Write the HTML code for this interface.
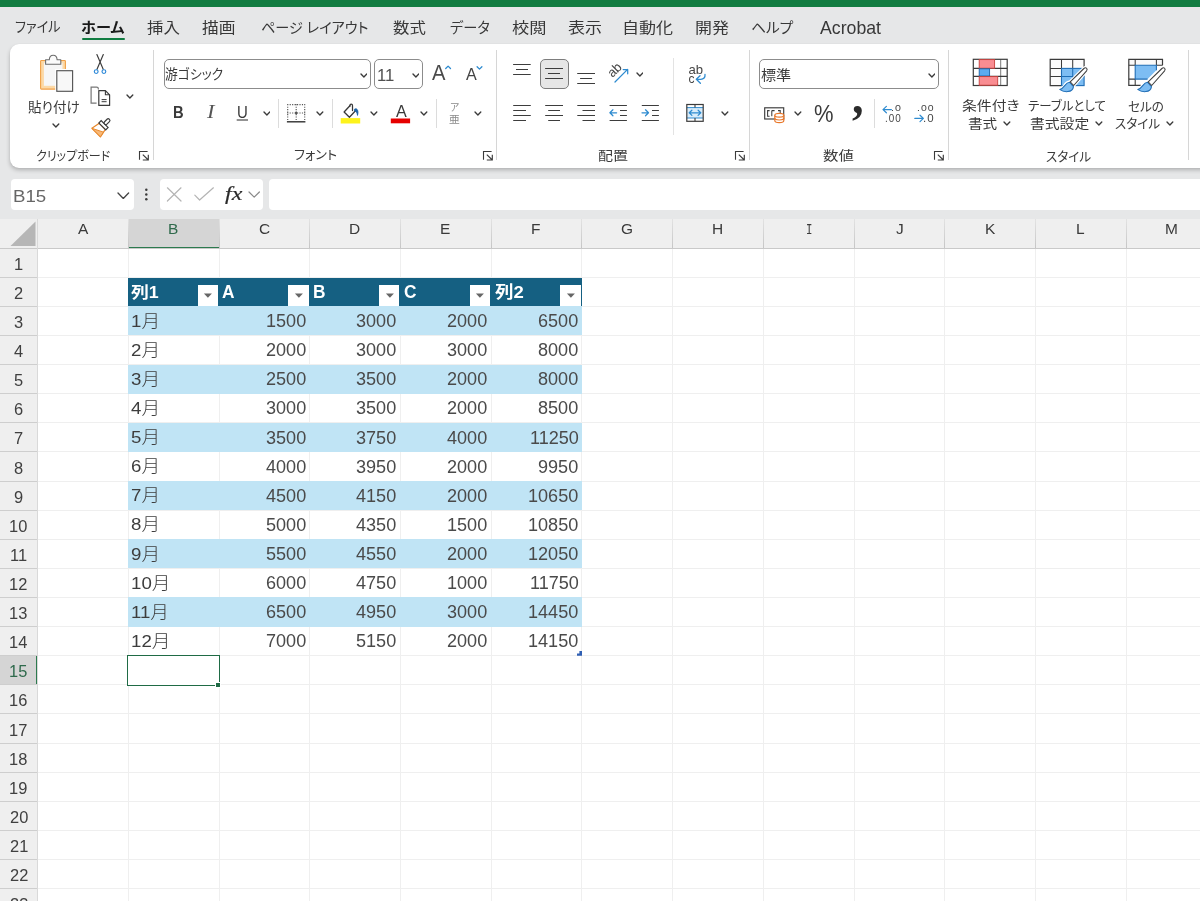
<!DOCTYPE html>
<html lang="ja"><head><meta charset="utf-8"><title>Excel</title>
<style>
html,body{margin:0;padding:0}
body{width:1200px;height:901px;overflow:hidden;position:relative;background:#e6e7e8;font-family:'Liberation Sans','Noto Sans CJK JP',sans-serif}
.abs,.t,svg.i{position:absolute}
.t{transform-origin:0 0;margin:0;padding:0}
#green{left:0;top:0;width:1200px;height:6.6px;background:#127c41}
#tabul{left:82px;top:37.5px;width:43px;height:2.5px;background:#107c41;border-radius:1.5px}
#ribbon{left:10px;top:44px;width:1210px;height:124px;background:#fff;border-radius:9px;box-shadow:0 2.5px 4px -0.5px rgba(0,0,0,.24),0 0 1.5px rgba(0,0,0,.08)}
.vsep{width:1px;background:#d6d6d6}
.combo{box-sizing:border-box;border:1px solid #8c8c8c;border-radius:5px;background:#fff;height:30px;top:59px}
.fbox{background:#fff;border-radius:4px;top:179px;height:30.5px}
#selbtn{left:539.5px;top:59px;width:29.5px;height:30px;box-sizing:border-box;border:1px solid #7d7d7d;border-radius:5px;background:#e6e6e6}
/* grid */
#colhdr{left:0;top:219px;width:1200px;height:29px;background:#efefef}
#rowhdr{left:0;top:248px;width:37px;height:653px;background:#efefef}
#sheet{left:38px;top:248px;width:1162px;height:653px;background:#fff}
.hl{height:1px;background:#efefef;left:38px;width:1162px}
.vl{width:1px;background:#efefef;top:248px;height:653px}
.rhl{height:1px;background:#cecece;left:0;width:37px}
.chl{width:1px;background:linear-gradient(#e2e2e2,#c6c6c6);top:219px;height:29px}
#app{position:absolute;left:0;top:0;width:1200px;height:901px;will-change:transform}

</style></head>
<body>
<div id="app">
<div class="abs" id="green"></div>
<div class="abs" id="tabul"></div>
<div class="abs" id="ribbon"></div>
<!-- ribbon group separators -->
<div class="abs vsep" style="left:153px;top:50px;height:110px"></div>
<div class="abs vsep" style="left:496px;top:50px;height:110px"></div>
<div class="abs vsep" style="left:749px;top:50px;height:110px"></div>
<div class="abs vsep" style="left:948px;top:50px;height:110px"></div>
<div class="abs vsep" style="left:1188px;top:50px;height:110px"></div>
<!-- small separators -->
<div class="abs vsep" style="left:278px;top:99px;height:29px;background:#dcdcdc"></div>
<div class="abs vsep" style="left:332px;top:99px;height:29px;background:#dcdcdc"></div>
<div class="abs vsep" style="left:436px;top:99px;height:29px;background:#dcdcdc"></div>
<div class="abs vsep" style="left:673px;top:58px;height:77px;background:#e3e3e3"></div>
<div class="abs vsep" style="left:874px;top:99px;height:29px;background:#dcdcdc"></div>
<!-- combos -->
<div class="abs combo" style="left:164px;width:207px"></div>
<div class="abs combo" style="left:373.5px;width:49.5px"></div>
<div class="abs combo" style="left:759px;width:179.5px"></div>
<div class="abs" id="selbtn"></div>
<!-- formula bar -->
<div class="abs fbox" style="left:10.5px;width:123px"></div>
<div class="abs fbox" style="left:160px;width:103px"></div>
<div class="abs fbox" style="left:268.5px;width:940px"></div>

<div class="abs" id="colhdr"></div>
<div class="abs" id="rowhdr"></div>
<div class="abs" id="sheet"></div>
<div class="abs" style="left:128px;top:219px;width:91px;height:29px;background:#d5d5d5"></div>
<div class="abs" style="left:128px;top:246.5px;width:91px;height:1.5px;background:#2c7a4e"></div>
<div class="abs" style="left:0;top:656.1px;width:37px;height:28.6px;background:#d5d5d5"></div>
<div class="abs" style="left:36px;top:656.1px;width:1.5px;height:28.6px;background:#2c7a4e"></div>
<svg class="i" style="left:9px;top:220px" width="28" height="27" viewBox="0 0 28 27"><path d="M26.5 1.5V26H1.5Z" fill="#b6b6b6"/></svg>
<div class="abs" style="left:128px;top:306.3px;width:454px;height:29.11px;background:#c0e4f5"></div>
<div class="abs" style="left:128px;top:364.5px;width:454px;height:29.11px;background:#c0e4f5"></div>
<div class="abs" style="left:128px;top:422.8px;width:454px;height:29.11px;background:#c0e4f5"></div>
<div class="abs" style="left:128px;top:481.0px;width:454px;height:29.11px;background:#c0e4f5"></div>
<div class="abs" style="left:128px;top:539.2px;width:454px;height:29.11px;background:#c0e4f5"></div>
<div class="abs" style="left:128px;top:597.4px;width:454px;height:29.11px;background:#c0e4f5"></div>
<div class="abs hl" style="top:276.7px"></div>
<div class="abs rhl" style="top:276.7px"></div>
<div class="abs hl" style="top:305.8px"></div>
<div class="abs rhl" style="top:305.8px"></div>
<div class="abs hl" style="top:334.9px"></div>
<div class="abs rhl" style="top:334.9px"></div>
<div class="abs hl" style="top:364.0px"></div>
<div class="abs rhl" style="top:364.0px"></div>
<div class="abs hl" style="top:393.1px"></div>
<div class="abs rhl" style="top:393.1px"></div>
<div class="abs hl" style="top:422.3px"></div>
<div class="abs rhl" style="top:422.3px"></div>
<div class="abs hl" style="top:451.4px"></div>
<div class="abs rhl" style="top:451.4px"></div>
<div class="abs hl" style="top:480.5px"></div>
<div class="abs rhl" style="top:480.5px"></div>
<div class="abs hl" style="top:509.6px"></div>
<div class="abs rhl" style="top:509.6px"></div>
<div class="abs hl" style="top:538.7px"></div>
<div class="abs rhl" style="top:538.7px"></div>
<div class="abs hl" style="top:567.8px"></div>
<div class="abs rhl" style="top:567.8px"></div>
<div class="abs hl" style="top:596.9px"></div>
<div class="abs rhl" style="top:596.9px"></div>
<div class="abs hl" style="top:626.0px"></div>
<div class="abs rhl" style="top:626.0px"></div>
<div class="abs hl" style="top:655.1px"></div>
<div class="abs rhl" style="top:655.1px"></div>
<div class="abs hl" style="top:684.2px"></div>
<div class="abs rhl" style="top:684.2px"></div>
<div class="abs hl" style="top:713.4px"></div>
<div class="abs rhl" style="top:713.4px"></div>
<div class="abs hl" style="top:742.5px"></div>
<div class="abs rhl" style="top:742.5px"></div>
<div class="abs hl" style="top:771.6px"></div>
<div class="abs rhl" style="top:771.6px"></div>
<div class="abs hl" style="top:800.7px"></div>
<div class="abs rhl" style="top:800.7px"></div>
<div class="abs hl" style="top:829.8px"></div>
<div class="abs rhl" style="top:829.8px"></div>
<div class="abs hl" style="top:858.9px"></div>
<div class="abs rhl" style="top:858.9px"></div>
<div class="abs hl" style="top:888.0px"></div>
<div class="abs rhl" style="top:888.0px"></div>
<div class="abs vl" style="left:37.0px"></div>
<div class="abs chl" style="left:37.0px"></div>
<div class="abs vl" style="left:127.7px"></div>
<div class="abs chl" style="left:127.7px"></div>
<div class="abs vl" style="left:218.5px"></div>
<div class="abs chl" style="left:218.5px"></div>
<div class="abs vl" style="left:309.2px"></div>
<div class="abs chl" style="left:309.2px"></div>
<div class="abs vl" style="left:399.9px"></div>
<div class="abs chl" style="left:399.9px"></div>
<div class="abs vl" style="left:490.7px"></div>
<div class="abs chl" style="left:490.7px"></div>
<div class="abs vl" style="left:581.4px"></div>
<div class="abs chl" style="left:581.4px"></div>
<div class="abs vl" style="left:672.1px"></div>
<div class="abs chl" style="left:672.1px"></div>
<div class="abs vl" style="left:762.8px"></div>
<div class="abs chl" style="left:762.8px"></div>
<div class="abs vl" style="left:853.6px"></div>
<div class="abs chl" style="left:853.6px"></div>
<div class="abs vl" style="left:944.3px"></div>
<div class="abs chl" style="left:944.3px"></div>
<div class="abs vl" style="left:1035.0px"></div>
<div class="abs chl" style="left:1035.0px"></div>
<div class="abs vl" style="left:1125.8px"></div>
<div class="abs chl" style="left:1125.8px"></div>
<div class="abs" style="left:0;top:247.7px;width:1200px;height:1px;background:#c9c9c9;z-index:0"></div>
<div class="abs" style="left:37px;top:219px;width:1px;height:682px;background:#d9d9d9"></div>
<div class="abs" style="left:128px;top:278.0px;width:454px;height:28.41px;background:#156082"></div>
<div class="abs" style="left:128px;top:306.3px;width:454px;height:29.11px;background:#c0e4f5"></div>
<div class="abs" style="left:128px;top:364.5px;width:454px;height:29.11px;background:#c0e4f5"></div>
<div class="abs" style="left:128px;top:422.8px;width:454px;height:29.11px;background:#c0e4f5"></div>
<div class="abs" style="left:128px;top:481.0px;width:454px;height:29.11px;background:#c0e4f5"></div>
<div class="abs" style="left:128px;top:539.2px;width:454px;height:29.11px;background:#c0e4f5"></div>
<div class="abs" style="left:128px;top:597.4px;width:454px;height:29.11px;background:#c0e4f5"></div>
<div class="abs" style="left:197.5px;top:285.3px;width:20.5px;height:20.6px;background:#fff"></div>
<svg class="i" style="left:203.1px;top:292.6px" width="10" height="6" viewBox="0 0 10 6"><path d="M0.9 0.6H8.9L4.9 4.7Z" fill="#666"/></svg>
<div class="abs" style="left:288.2px;top:285.3px;width:20.5px;height:20.6px;background:#fff"></div>
<svg class="i" style="left:293.8px;top:292.6px" width="10" height="6" viewBox="0 0 10 6"><path d="M0.9 0.6H8.9L4.9 4.7Z" fill="#666"/></svg>
<div class="abs" style="left:378.9px;top:285.3px;width:20.5px;height:20.6px;background:#fff"></div>
<svg class="i" style="left:384.5px;top:292.6px" width="10" height="6" viewBox="0 0 10 6"><path d="M0.9 0.6H8.9L4.9 4.7Z" fill="#666"/></svg>
<div class="abs" style="left:469.7px;top:285.3px;width:20.5px;height:20.6px;background:#fff"></div>
<svg class="i" style="left:475.3px;top:292.6px" width="10" height="6" viewBox="0 0 10 6"><path d="M0.9 0.6H8.9L4.9 4.7Z" fill="#666"/></svg>
<div class="abs" style="left:560.4px;top:285.3px;width:20.5px;height:20.6px;background:#fff"></div>
<svg class="i" style="left:566.0px;top:292.6px" width="10" height="6" viewBox="0 0 10 6"><path d="M0.9 0.6H8.9L4.9 4.7Z" fill="#666"/></svg>
<div class="abs" style="left:127.3px;top:655px;width:92.7px;height:31.1px;box-sizing:border-box;border:1.3px solid #1f6b45;background:#fff"></div>
<div class="abs" style="left:215px;top:681.6px;width:4.4px;height:4.3px;background:#1f6b45;border:1px solid #fff"></div>
<svg class="i" style="left:576px;top:650px" width="7" height="7" viewBox="0 0 7 7"><path d="M1 5.8V3.5H3.4V1.1H6V5.8Z" fill="#2f5fb3"/></svg>
<svg class="i" style="left:52.0px;top:122.6px" width="7.8" height="5.0" viewBox="0 0 7.8 5.0" fill="none"><path d="M1 1L3.90 4.00L6.8 1" stroke="#3b3b3b" stroke-width="1.35" stroke-linecap="round" stroke-linejoin="round"/></svg>
<svg class="i" style="left:125.8px;top:94.2px" width="7.8" height="5.0" viewBox="0 0 7.8 5.0" fill="none"><path d="M1 1L3.90 4.00L6.8 1" stroke="#3b3b3b" stroke-width="1.35" stroke-linecap="round" stroke-linejoin="round"/></svg>
<svg class="i" style="left:262.5px;top:111.3px" width="7.8" height="5.0" viewBox="0 0 7.8 5.0" fill="none"><path d="M1 1L3.90 4.00L6.8 1" stroke="#3b3b3b" stroke-width="1.35" stroke-linecap="round" stroke-linejoin="round"/></svg>
<svg class="i" style="left:316.2px;top:111.3px" width="7.8" height="5.0" viewBox="0 0 7.8 5.0" fill="none"><path d="M1 1L3.90 4.00L6.8 1" stroke="#3b3b3b" stroke-width="1.35" stroke-linecap="round" stroke-linejoin="round"/></svg>
<svg class="i" style="left:370.0px;top:111.3px" width="7.8" height="5.0" viewBox="0 0 7.8 5.0" fill="none"><path d="M1 1L3.90 4.00L6.8 1" stroke="#3b3b3b" stroke-width="1.35" stroke-linecap="round" stroke-linejoin="round"/></svg>
<svg class="i" style="left:420.2px;top:111.3px" width="7.8" height="5.0" viewBox="0 0 7.8 5.0" fill="none"><path d="M1 1L3.90 4.00L6.8 1" stroke="#3b3b3b" stroke-width="1.35" stroke-linecap="round" stroke-linejoin="round"/></svg>
<svg class="i" style="left:473.9px;top:111.3px" width="7.8" height="5.0" viewBox="0 0 7.8 5.0" fill="none"><path d="M1 1L3.90 4.00L6.8 1" stroke="#3b3b3b" stroke-width="1.35" stroke-linecap="round" stroke-linejoin="round"/></svg>
<svg class="i" style="left:359.6px;top:72.7px" width="7.8" height="5.0" viewBox="0 0 7.8 5.0" fill="none"><path d="M1 1L3.90 4.00L6.8 1" stroke="#3b3b3b" stroke-width="1.35" stroke-linecap="round" stroke-linejoin="round"/></svg>
<svg class="i" style="left:411.7px;top:72.7px" width="7.8" height="5.0" viewBox="0 0 7.8 5.0" fill="none"><path d="M1 1L3.90 4.00L6.8 1" stroke="#3b3b3b" stroke-width="1.35" stroke-linecap="round" stroke-linejoin="round"/></svg>
<svg class="i" style="left:635.6px;top:71.7px" width="7.8" height="5.0" viewBox="0 0 7.8 5.0" fill="none"><path d="M1 1L3.90 4.00L6.8 1" stroke="#3b3b3b" stroke-width="1.35" stroke-linecap="round" stroke-linejoin="round"/></svg>
<svg class="i" style="left:721.2px;top:111.3px" width="7.8" height="5.0" viewBox="0 0 7.8 5.0" fill="none"><path d="M1 1L3.90 4.00L6.8 1" stroke="#3b3b3b" stroke-width="1.35" stroke-linecap="round" stroke-linejoin="round"/></svg>
<svg class="i" style="left:793.9px;top:111.3px" width="7.8" height="5.0" viewBox="0 0 7.8 5.0" fill="none"><path d="M1 1L3.90 4.00L6.8 1" stroke="#3b3b3b" stroke-width="1.35" stroke-linecap="round" stroke-linejoin="round"/></svg>
<svg class="i" style="left:927.6px;top:72.7px" width="7.8" height="5.0" viewBox="0 0 7.8 5.0" fill="none"><path d="M1 1L3.90 4.00L6.8 1" stroke="#3b3b3b" stroke-width="1.35" stroke-linecap="round" stroke-linejoin="round"/></svg>
<svg class="i" style="left:1003.4px;top:121.0px" width="7.8" height="5.0" viewBox="0 0 7.8 5.0" fill="none"><path d="M1 1L3.90 4.00L6.8 1" stroke="#3b3b3b" stroke-width="1.35" stroke-linecap="round" stroke-linejoin="round"/></svg>
<svg class="i" style="left:1095.2px;top:121.0px" width="7.8" height="5.0" viewBox="0 0 7.8 5.0" fill="none"><path d="M1 1L3.90 4.00L6.8 1" stroke="#3b3b3b" stroke-width="1.35" stroke-linecap="round" stroke-linejoin="round"/></svg>
<svg class="i" style="left:1166.2px;top:121.0px" width="7.8" height="5.0" viewBox="0 0 7.8 5.0" fill="none"><path d="M1 1L3.90 4.00L6.8 1" stroke="#3b3b3b" stroke-width="1.35" stroke-linecap="round" stroke-linejoin="round"/></svg>
<svg class="i" style="left:117.2px;top:191.9px" width="12.6" height="7.5" viewBox="0 0 12.6 7.5" fill="none"><path d="M1 1L6.30 6.50L11.6 1" stroke="#444" stroke-width="1.3" stroke-linecap="round" stroke-linejoin="round"/></svg>
<svg class="i" style="left:248.3px;top:191.4px" width="12.4" height="7.2" viewBox="0 0 12.4 7.2" fill="none"><path d="M1 1L6.20 6.20L11.4 1" stroke="#8a8a8a" stroke-width="1.2" stroke-linecap="round" stroke-linejoin="round"/></svg>
<svg class="i" style="left:138.2px;top:150px" width="12" height="12" viewBox="0 0 12 12" fill="none"><path d="M9.6 1.5H1.5V9.7" stroke="#3b3b3b" stroke-width="1.1"/><path d="M4.8 4.7L10.3 10M10.3 4.7V10H4.8" stroke="#3b3b3b" stroke-width="1.15"/></svg>
<svg class="i" style="left:481.8px;top:150px" width="12" height="12" viewBox="0 0 12 12" fill="none"><path d="M9.6 1.5H1.5V9.7" stroke="#3b3b3b" stroke-width="1.1"/><path d="M4.8 4.7L10.3 10M10.3 4.7V10H4.8" stroke="#3b3b3b" stroke-width="1.15"/></svg>
<svg class="i" style="left:733.8px;top:150px" width="12" height="12" viewBox="0 0 12 12" fill="none"><path d="M9.6 1.5H1.5V9.7" stroke="#3b3b3b" stroke-width="1.1"/><path d="M4.8 4.7L10.3 10M10.3 4.7V10H4.8" stroke="#3b3b3b" stroke-width="1.15"/></svg>
<svg class="i" style="left:933.2px;top:150px" width="12" height="12" viewBox="0 0 12 12" fill="none"><path d="M9.6 1.5H1.5V9.7" stroke="#3b3b3b" stroke-width="1.1"/><path d="M4.8 4.7L10.3 10M10.3 4.7V10H4.8" stroke="#3b3b3b" stroke-width="1.15"/></svg>
<svg class="i" style="left:38px;top:53px" width="38" height="41" viewBox="0 0 38 41" fill="none">
<rect x="2.6" y="7.5" width="24.8" height="28.6" rx="0.8" fill="#fcd9a6" stroke="#f1a047" stroke-width="1.1"/>
<rect x="5.9" y="9.6" width="18.6" height="23.2" fill="#f6f6f6"/>
<rect x="17.2" y="16" width="19" height="23.8" fill="#fff"/>
<path d="M7.6 11.3V6.7H11.3C11.6 0.7 18.8 0.7 19.1 6.7H22.8V11.3Z" fill="#fbfbfb" stroke="#6c6c6c" stroke-width="1.1" stroke-linejoin="round"/>
<rect x="18.8" y="17.7" width="15.8" height="20.6" fill="#f8f8f8" stroke="#555" stroke-width="1.15"/>
</svg>
<svg class="i" style="left:92px;top:53px" width="16" height="22" viewBox="0 0 16 22" fill="none">
<path d="M4.9 1.6L11.2 16.2M11.3 1.6L5 16.2" stroke="#3b3b3b" stroke-width="1.15" stroke-linecap="round"/>
<circle cx="4.2" cy="18.6" r="1.9" stroke="#2b88d8" stroke-width="1.15"/>
<circle cx="11.9" cy="18.6" r="1.9" stroke="#2b88d8" stroke-width="1.15"/>
</svg>
<svg class="i" style="left:89px;top:85px" width="23" height="22" viewBox="0 0 23 22" fill="none">
<path d="M7.6 18.2H2.1V2.1H7.6A1.8 1.8 0 0 1 9.4 3.9V4.6" stroke="#777" stroke-width="1.2" fill="none"/>
<path d="M9.8 5.6H16.4L20.6 9.8V20.4H9.8Z" fill="#fff" stroke="#3b3b3b" stroke-width="1.2" stroke-linejoin="round"/>
<path d="M16.4 5.6V9.8H20.6" stroke="#3b3b3b" stroke-width="1.1" fill="none"/>
<path d="M12.6 14.6H17.6M12.6 16.7H17.6" stroke="#3b3b3b" stroke-width="1"/>
</svg>
<svg class="i" style="left:88px;top:116px" width="24" height="22" viewBox="0 0 24 22" fill="none">
<g transform="translate(14.3 10.4) rotate(45)">
<path d="M-4.3 0H4.3L6 8.7H-6Z" fill="#fff" stroke="#e8872a" stroke-width="1.2" stroke-linejoin="round"/>
<path d="M-6 8.7L4.9 3.2L6 8.7Z" fill="#f7b877" stroke="#e8872a" stroke-width="0.9" stroke-linejoin="round"/>
<rect x="-4.9" y="-3.3" width="9.8" height="3.3" fill="#fff" stroke="#3b3b3b" stroke-width="1.15"/>
<rect x="-1.7" y="-10" width="3.4" height="6.7" rx="1.6" fill="#fff" stroke="#3b3b3b" stroke-width="1.15"/>
</g>
</svg>
<svg class="i" style="left:236px;top:119.4px" width="13" height="2" viewBox="0 0 13 2" fill="none"><path d="M0.7 1H12" stroke="#3b3b3b" stroke-width="1.1"/></svg>
<svg class="i" style="left:286px;top:102.5px" width="21" height="21" viewBox="0 0 21 21" fill="none">
<g stroke="#555" stroke-width="1.15" stroke-dasharray="1.15 1.3">
<path d="M1.2 1.6H19.2M1.2 10H19.2M1.7 1.2V17.6M10.2 1.2V17.6M18.7 1.2V17.6"/>
</g>
<circle cx="10.2" cy="10" r="1.25" fill="#555"/>
<path d="M0.9 18.8H19.4" stroke="#2f2f2f" stroke-width="1.4"/>
</svg>
<svg class="i" style="left:339px;top:101px" width="23" height="23" viewBox="0 0 23 23" fill="none">
<rect x="1.7" y="17.1" width="19.5" height="5.4" fill="#fdf31c"/>
<path d="M10.9 4.8L5.1 11L10.4 16.2L16.5 9.8" fill="none" stroke="#383838" stroke-width="1.3" stroke-linejoin="round" stroke-linecap="round"/>
<path d="M10.9 5.2V4.5A1.3 1.3 0 0 1 13.5 4.5V9.6" stroke="#383838" stroke-width="1.25" fill="none" stroke-linecap="round"/>
<path d="M15.4 8.3C17.8 6.6 20 9.4 18.5 14.4C18.2 11.8 17.2 10.2 15.6 9.9Z" fill="#1d62a6" stroke="#1d62a6" stroke-width="0.8" stroke-linejoin="round"/>
</svg>
<svg class="i" style="left:390px;top:118px" width="21" height="6" viewBox="0 0 21 6" fill="none"><rect x="0.8" y="0.5" width="19.3" height="4.8" fill="#e60000"/></svg>
<svg class="i" style="left:443.5px;top:64px" width="9" height="7" viewBox="0 0 9 7" fill="none"><path d="M1.7 4.5L4.1 2.1L6.5 4.5" stroke="#2e8bd0" stroke-width="1.3" stroke-linecap="round" stroke-linejoin="round"/></svg>
<svg class="i" style="left:475px;top:64.5px" width="9" height="7" viewBox="0 0 9 7" fill="none"><path d="M2.1 1.7L4.5 4.1L6.9 1.7" stroke="#2e8bd0" stroke-width="1.3" stroke-linecap="round" stroke-linejoin="round"/></svg>
<svg class="i" style="left:512px;top:63px" width="20" height="13" viewBox="0 0 20 13" fill="none"><path d="M1.1 1.5H18.7M4.0 6.5H16.0M1.1 11.5H18.7" stroke="#3d3d3d" stroke-width="1.12"/></svg>
<svg class="i" style="left:544px;top:67px" width="20" height="13" viewBox="0 0 20 13" fill="none"><path d="M1.1 1.5H19.0M4.0 6.5H16.0M1.1 11.5H19.0" stroke="#3d3d3d" stroke-width="1.12"/></svg>
<svg class="i" style="left:576px;top:72px" width="20" height="13" viewBox="0 0 20 13" fill="none"><path d="M1.2 1.5H19.0M4.1 6.5H16.1M1.2 11.5H19.0" stroke="#3d3d3d" stroke-width="1.12"/></svg>
<svg class="i" style="left:512px;top:104px" width="20" height="18" viewBox="0 0 20 18" fill="none"><path d="M1.2 1.5H18.8M1.2 6.5H14.0M1.2 11.5H18.8M1.2 16.5H14.0" stroke="#3d3d3d" stroke-width="1.12"/></svg>
<svg class="i" style="left:544px;top:104px" width="20" height="18" viewBox="0 0 20 18" fill="none"><path d="M1.2 1.5H19.0M4.2 6.5H16.0M1.2 11.5H19.0M4.2 16.5H16.0" stroke="#3d3d3d" stroke-width="1.12"/></svg>
<svg class="i" style="left:576px;top:104px" width="20" height="18" viewBox="0 0 20 18" fill="none"><path d="M1.3 1.5H19.0M6.5 6.5H19.0M1.3 11.5H19.0M6.5 16.5H19.0" stroke="#3d3d3d" stroke-width="1.12"/></svg>
<svg class="i" style="left:608px;top:104px" width="20" height="18" viewBox="0 0 20 18" fill="none"><path d="M1.6 1.5H18.9M12.0 6.5H18.9M12.0 11.5H18.9M1.6 16.5H18.9" stroke="#3d3d3d" stroke-width="1.12"/></svg>
<svg class="i" style="left:640px;top:104px" width="20" height="18" viewBox="0 0 20 18" fill="none"><path d="M1.8 1.5H18.9M12.0 6.5H18.9M12.0 11.5H18.9M1.8 16.5H18.9" stroke="#3d3d3d" stroke-width="1.12"/></svg>
<svg class="i" style="left:608px;top:108px" width="11" height="10" viewBox="0 0 11 10" fill="none"><path d="M2 4.8H8.6M4.9 1.8L1.9 4.8L4.9 7.8" stroke="#2e8bd0" stroke-width="1.25" stroke-linecap="round" stroke-linejoin="round"/></svg>
<svg class="i" style="left:640px;top:108px" width="11" height="10" viewBox="0 0 11 10" fill="none"><path d="M2 4.8H8.4M5.5 1.8L8.5 4.8L5.5 7.8" stroke="#2e8bd0" stroke-width="1.25" stroke-linecap="round" stroke-linejoin="round"/></svg>
<svg class="i" style="left:605px;top:60px" width="26" height="25" viewBox="0 0 26 25" fill="none">
<text x="0" y="0" transform="translate(7.4 18) rotate(-45)" font-family="'Liberation Sans',sans-serif" font-size="13" fill="#454545">ab</text>
<path d="M10 22L22.6 9.4M18.2 9.5H22.7V13.8" stroke="#2e8bd0" stroke-width="1.25" stroke-linecap="round" stroke-linejoin="round"/>
</svg>
<svg class="i" style="left:686px;top:62px" width="22" height="24" viewBox="0 0 22 24" fill="none">
<text x="2.5" y="11.7" font-family="'Liberation Sans',sans-serif" font-size="13" fill="#454545" textLength="14.6" lengthAdjust="spacingAndGlyphs">ab</text>
<text x="2.5" y="20.7" font-family="'Liberation Sans',sans-serif" font-size="13" fill="#454545" textLength="6" lengthAdjust="spacingAndGlyphs">c</text>
<path d="M19 12.4C19.4 15.6 17.6 17.3 14.8 17.3H10.8M14 13.7L10.3 17.3L14.4 21.3" stroke="#2e8bd0" stroke-width="1.3" stroke-linecap="round" stroke-linejoin="round" fill="none"/>
</svg>
<svg class="i" style="left:684px;top:102px" width="22" height="22" viewBox="0 0 22 22" fill="none">
<rect x="2.8" y="5.6" width="16.4" height="10.4" fill="#d8ecfa"/>
<path d="M2.8 5.6H19.2M2.8 16H19.2" stroke="#2e8bd0" stroke-width="1"/>
<rect x="2.8" y="2.5" width="16.4" height="16.8" stroke="#3b3b3b" stroke-width="1.2"/>
<path d="M11 2.5V5.6M11 16V19.3" stroke="#3b3b3b" stroke-width="1.1"/>
<path d="M5.4 10.8H16.6M7.9 8.2L5.2 10.8L7.9 13.4M14.1 8.2L16.8 10.8L14.1 13.4" stroke="#2e8bd0" stroke-width="1.2" stroke-linecap="round" stroke-linejoin="round"/>
</svg>
<svg class="i" style="left:763px;top:106px" width="23" height="18" viewBox="0 0 23 18" fill="none">
<rect x="1.7" y="1.8" width="19" height="11.2" stroke="#3b3b3b" stroke-width="1.15" fill="#fff"/>
<path d="M6.6 4.6H4.6V10.2H6.6M8.8 4.6H11.6M8.8 4.6V10.2M15 4.6H17.2V7" stroke="#3b3b3b" stroke-width="1.05" fill="none"/>
<path d="M11.8 9.2V14.6C11.8 17.4 20.8 17.4 20.8 14.6V9.2" fill="#fff" stroke="#e8772a" stroke-width="1.2"/>
<ellipse cx="16.3" cy="9.2" rx="4.5" ry="1.9" fill="#fff" stroke="#e8772a" stroke-width="1.2"/>
<path d="M11.8 12C11.8 14.6 20.8 14.6 20.8 12" stroke="#e8772a" stroke-width="1.1" fill="none"/>
</svg>
<svg class="i" style="left:881px;top:105px" width="13" height="10" viewBox="0 0 13 10" fill="none"><path d="M2 4.6H10.4M5.4 1.4L2 4.6L5.4 7.8" stroke="#2e8bd0" stroke-width="1.2" stroke-linecap="round" stroke-linejoin="round"/></svg>
<svg class="i" style="left:913px;top:114px" width="13" height="10" viewBox="0 0 13 10" fill="none"><path d="M1.8 4.4H10.2M7 1.2L10.4 4.4L7 7.6" stroke="#2e8bd0" stroke-width="1.2" stroke-linecap="round" stroke-linejoin="round"/></svg>
<svg class="i" style="left:972px;top:58px" width="37" height="29" viewBox="0 0 37 29" fill="none"><rect x="1.30" y="1.30" width="33.90" height="26.20" fill="#fff"/><path d="M28.70 1.30V27.50" stroke="#7a7a7a" stroke-width="1"/><path d="M1.30 10.40H35.20M1.30 18.40H35.20" stroke="#3b3b3b" stroke-width="1.1"/><rect x="1.30" y="1.30" width="33.90" height="26.20" stroke="#3b3b3b" stroke-width="1.2"/><rect x="7.20" y="1.60" width="15.40" height="8.60" fill="#f98d92" stroke="#c9403c" stroke-width="0.9"/><rect x="7.20" y="10.80" width="10.40" height="7.20" fill="#5cabf0" stroke="#1c64a8" stroke-width="0.9"/><rect x="7.20" y="18.60" width="18.50" height="8.60" fill="#f98d92" stroke="#c9403c" stroke-width="0.9"/></svg>
<svg class="i" style="left:1049px;top:58px" width="41" height="37" viewBox="0 0 41 37" fill="none"><rect x="1.20" y="1.30" width="33.90" height="26.30" fill="#fcfcfc"/><rect x="12.50" y="10.40" width="22.60" height="17.20" fill="#7dbdf3"/><path d="M12.50 1.30V10.40M23.70 1.30V10.40M1.20 10.40H12.50M1.20 18.40H12.50" stroke="#3b3b3b" stroke-width="1.05"/><path d="M35.10 10.40V1.30H1.20V27.60H12.50" stroke="#3b3b3b" stroke-width="1.2"/><path d="M23.70 10.40V27.60M12.50 18.40H35.10" stroke="#1f6db5" stroke-width="1.05"/><rect x="12.50" y="10.40" width="22.60" height="17.20" stroke="#1f6db5" stroke-width="1.1"/><path d="M20.70 24.30C15.60 24.30 16.00 30.60 10.70 31.40C15.00 34.60 23.60 35.00 24.50 28.60Z" fill="#fff" stroke="#fff" stroke-width="3.4" stroke-linejoin="round"/><path d="M21.20 23.90L34.90 10.50C36.60 9.00 39.20 10.40 37.60 12.80L24.70 27.50Z" fill="#fff" stroke="#fff" stroke-width="3.4" stroke-linejoin="round"/><path d="M20.70 24.30C15.60 24.30 16.00 30.60 10.70 31.40C15.00 34.60 23.60 35.00 24.50 28.60Z" fill="#7dbdf3" stroke="#1f6db5" stroke-width="1.05" stroke-linejoin="round"/><path d="M21.20 23.90L34.90 10.50C36.60 9.00 39.20 10.40 37.60 12.80L24.70 27.50Z" fill="#fff" stroke="#3f3f3f" stroke-width="1.05" stroke-linejoin="round"/></svg>
<svg class="i" style="left:1127px;top:58px" width="41" height="37" viewBox="0 0 41 37" fill="none"><path d="M1.80 1.30H35.50V7.20H1.80Z" fill="#fafafa"/><path d="M8.20 7.20H29.40V12.20L20.60 21.10H8.20Z" fill="#7dbdf3"/><path d="M8.20 1.30V7.20M8.20 21.10V27.40M29.40 1.30V7.20M1.80 7.20H8.20M29.40 7.20H35.50M1.80 21.10H8.20" stroke="#3b3b3b" stroke-width="1.05"/><path d="M29.40 12.20V7.20H8.20V21.10H20.60" stroke="#1f6db5" stroke-width="1.1"/><path d="M35.50 7.20V1.30H1.80V27.40H13.80" stroke="#3b3b3b" stroke-width="1.2"/><path d="M20.70 24.30C15.60 24.30 16.00 30.60 10.70 31.40C15.00 34.60 23.60 35.00 24.50 28.60Z" fill="#fff" stroke="#fff" stroke-width="3.4" stroke-linejoin="round"/><path d="M21.20 23.90L34.90 10.50C36.60 9.00 39.20 10.40 37.60 12.80L24.70 27.50Z" fill="#fff" stroke="#fff" stroke-width="3.4" stroke-linejoin="round"/><path d="M20.70 24.30C15.60 24.30 16.00 30.60 10.70 31.40C15.00 34.60 23.60 35.00 24.50 28.60Z" fill="#7dbdf3" stroke="#1f6db5" stroke-width="1.05" stroke-linejoin="round"/><path d="M21.20 23.90L34.90 10.50C36.60 9.00 39.20 10.40 37.60 12.80L24.70 27.50Z" fill="#fff" stroke="#3f3f3f" stroke-width="1.05" stroke-linejoin="round"/></svg>
<svg class="i" style="left:144px;top:187px" width="5" height="15" viewBox="0 0 5 15" fill="none"><circle cx="2.3" cy="2.7" r="1.25" fill="#3b3b3b"/><circle cx="2.3" cy="7.5" r="1.25" fill="#3b3b3b"/><circle cx="2.3" cy="12.3" r="1.25" fill="#3b3b3b"/></svg>
<svg class="i" style="left:166px;top:186px" width="17" height="17" viewBox="0 0 17 17" fill="none"><path d="M1.4 1.8L15 15M15 1.8L1.4 15" stroke="#b4b4b4" stroke-width="1.2" stroke-linecap="round"/></svg>
<svg class="i" style="left:193px;top:186px" width="22" height="17" viewBox="0 0 22 17" fill="none"><path d="M1.8 9.2L6.6 14L20.4 1.8" stroke="#b4b4b4" stroke-width="1.2" stroke-linecap="round" stroke-linejoin="round"/></svg>
<div class="t" style="left:15.23px;top:8.60px;font-family:'Liberation Sans','Noto Sans CJK JP',sans-serif;font-size:16px;font-weight:normal;color:#383838;font-feature-settings:'palt';line-height:40px;white-space:pre;transform:scale(0.8222,0.9016)">ファイル</div>
<div class="t" style="left:80.51px;top:9.72px;font-family:'Liberation Sans','Noto Sans CJK JP',sans-serif;font-size:16px;font-weight:bold;color:#1b1b1b;font-feature-settings:'palt';line-height:40px;white-space:pre;transform:scale(0.9492,0.9016)">ホーム</div>
<div class="t" style="left:147.35px;top:9.65px;font-family:'Liberation Sans','Noto Sans CJK JP',sans-serif;font-size:16px;font-weight:normal;color:#383838;font-feature-settings:'palt';line-height:40px;white-space:pre;transform:scale(1.0277,0.9016)">挿入</div>
<div class="t" style="left:201.80px;top:9.53px;font-family:'Liberation Sans','Noto Sans CJK JP',sans-serif;font-size:16px;font-weight:normal;color:#383838;font-feature-settings:'palt';line-height:40px;white-space:pre;transform:scale(1.0450,0.9016)">描画</div>
<div class="t" style="left:261.10px;top:9.75px;font-family:'Liberation Sans','Noto Sans CJK JP',sans-serif;font-size:16px;font-weight:normal;color:#383838;font-feature-settings:'palt';line-height:40px;white-space:pre;transform:scale(0.8826,0.9016)">ページ レイアウト</div>
<div class="t" style="left:392.67px;top:9.52px;font-family:'Liberation Sans','Noto Sans CJK JP',sans-serif;font-size:16px;font-weight:normal;color:#383838;font-feature-settings:'palt';line-height:40px;white-space:pre;transform:scale(1.0261,0.9016)">数式</div>
<div class="t" style="left:450.26px;top:9.53px;font-family:'Liberation Sans','Noto Sans CJK JP',sans-serif;font-size:16px;font-weight:normal;color:#383838;font-feature-settings:'palt';line-height:40px;white-space:pre;transform:scale(0.8891,0.9016)">データ</div>
<div class="t" style="left:511.86px;top:10.39px;font-family:'Liberation Sans','Noto Sans CJK JP',sans-serif;font-size:16px;font-weight:normal;color:#383838;font-feature-settings:'palt';line-height:40px;white-space:pre;transform:scale(1.0766,0.9016)">校閲</div>
<div class="t" style="left:567.65px;top:10.39px;font-family:'Liberation Sans','Noto Sans CJK JP',sans-serif;font-size:16px;font-weight:normal;color:#383838;font-feature-settings:'palt';line-height:40px;white-space:pre;transform:scale(1.0635,0.9016)">表示</div>
<div class="t" style="left:621.87px;top:9.70px;font-family:'Liberation Sans','Noto Sans CJK JP',sans-serif;font-size:16px;font-weight:normal;color:#383838;font-feature-settings:'palt';line-height:40px;white-space:pre;transform:scale(1.0645,0.9016)">自動化</div>
<div class="t" style="left:695.48px;top:9.73px;font-family:'Liberation Sans','Noto Sans CJK JP',sans-serif;font-size:16px;font-weight:normal;color:#383838;font-feature-settings:'palt';line-height:40px;white-space:pre;transform:scale(1.0593,0.9016)">開発</div>
<div class="t" style="left:751.07px;top:10.21px;font-family:'Liberation Sans','Noto Sans CJK JP',sans-serif;font-size:16px;font-weight:normal;color:#383838;font-feature-settings:'palt';line-height:40px;white-space:pre;transform:scale(0.9192,0.9016)">ヘルプ</div>
<div class="t" style="left:820.49px;top:8.15px;font-family:'Liberation Sans','Noto Sans CJK JP',sans-serif;font-size:17px;font-weight:normal;color:#383838;font-feature-settings:'palt';line-height:40px;white-space:pre;transform:scale(1.0418,1.0433)">Acrobat</div>
<div class="t" style="left:27.69px;top:87.59px;font-family:'Liberation Sans','Noto Sans CJK JP',sans-serif;font-size:13.5px;font-weight:normal;color:#3a3a3a;font-feature-settings:'palt';line-height:40px;white-space:pre;transform:scale(1.0068,0.9871)">貼り付け</div>
<div class="t" style="left:35.89px;top:137.39px;font-family:'Liberation Sans','Noto Sans CJK JP',sans-serif;font-size:13px;font-weight:normal;color:#3a3a3a;font-feature-settings:'palt';line-height:40px;white-space:pre;transform:scale(0.9269,0.9652)">クリップボード</div>
<div class="t" style="left:164.75px;top:55.14px;font-family:'Liberation Sans','Noto Sans CJK JP',sans-serif;font-size:14px;font-weight:normal;color:#3a3a3a;font-feature-settings:'palt';line-height:40px;white-space:pre;transform:scale(0.9144,0.9670)">游ゴシック</div>
<div class="t" style="left:376.93px;top:53.09px;font-family:'Liberation Sans','Noto Sans CJK JP',sans-serif;font-size:15px;font-weight:normal;color:#505050;font-feature-settings:'palt';line-height:40px;white-space:pre;transform:scale(1.1166,1.1092)">11</div>
<div class="t" style="left:172.98px;top:93.00px;font-family:'Liberation Sans','Noto Sans CJK JP',sans-serif;font-size:16px;font-weight:bold;color:#3a3a3a;font-feature-settings:'palt';line-height:40px;white-space:pre;transform:scale(0.9212,1.0000)">B</div>
<div class="t" style="left:207.09px;top:92.34px;font-family:'Liberation Serif','Noto Serif CJK SC',serif;font-size:17px;font-weight:normal;color:#555;font-feature-settings:'palt';line-height:40px;white-space:pre;font-style:italic;transform:scale(1.3187,1.0563)">I</div>
<div class="t" style="left:237.24px;top:92.86px;font-family:'Liberation Sans','Noto Sans CJK JP',sans-serif;font-size:16px;font-weight:normal;color:#3a3a3a;font-feature-settings:'palt';line-height:40px;white-space:pre;transform:scale(0.9356,1.0048)">U</div>
<div class="t" style="left:294.13px;top:135.86px;font-family:'Liberation Sans','Noto Sans CJK JP',sans-serif;font-size:13px;font-weight:normal;color:#3a3a3a;font-feature-settings:'palt';line-height:40px;white-space:pre;transform:scale(1.0121,0.9652)">フォント</div>
<div class="t" style="left:432.13px;top:50.73px;font-family:'Liberation Sans','Noto Sans CJK JP',sans-serif;font-size:21px;font-weight:normal;color:#4a4a4a;font-feature-settings:'palt';line-height:40px;white-space:pre;transform:scale(0.9597,1.0858)">A</div>
<div class="t" style="left:466.20px;top:55.29px;font-family:'Liberation Sans','Noto Sans CJK JP',sans-serif;font-size:15.5px;font-weight:normal;color:#444;font-feature-settings:'palt';line-height:40px;white-space:pre;transform:scale(1.0406,1.0174)">A</div>
<div class="t" style="left:395.93px;top:91.56px;font-family:'Liberation Sans','Noto Sans CJK JP',sans-serif;font-size:17px;font-weight:normal;color:#3a3a3a;font-feature-settings:'palt';line-height:40px;white-space:pre;transform:scale(0.9509,1.0131)">A</div>
<div class="t" style="left:450.20px;top:87.93px;font-family:'Liberation Sans','Noto Sans CJK JP',sans-serif;font-size:10px;font-weight:normal;color:#8a8a8a;font-feature-settings:'palt';line-height:40px;white-space:pre;transform:scale(0.9799,1.0035)">ア</div>
<div class="t" style="left:449.17px;top:98.79px;font-family:'Liberation Sans','Noto Sans CJK JP',sans-serif;font-size:10.5px;font-weight:normal;color:#8a8a8a;font-feature-settings:'palt';line-height:40px;white-space:pre;transform:scale(1.0246,0.9838)">亜</div>
<div class="t" style="left:598.49px;top:136.50px;font-family:'Liberation Sans','Noto Sans CJK JP',sans-serif;font-size:13px;font-weight:normal;color:#3a3a3a;font-feature-settings:'palt';line-height:40px;white-space:pre;transform:scale(1.1552,0.9652)">配置</div>
<div class="t" style="left:760.69px;top:55.15px;font-family:'Liberation Sans','Noto Sans CJK JP',sans-serif;font-size:14px;font-weight:normal;color:#3a3a3a;font-feature-settings:'palt';line-height:40px;white-space:pre;transform:scale(1.0772,1.0080)">標準</div>
<div class="t" style="left:814.23px;top:92.53px;font-family:'Liberation Sans','Noto Sans CJK JP',sans-serif;font-size:22px;font-weight:normal;color:#3a3a3a;font-feature-settings:'palt';line-height:40px;white-space:pre;transform:scale(0.9986,1.0676)">%</div>
<div class="t" style="left:851.79px;top:75.78px;font-family:'Liberation Serif','Noto Serif CJK SC',serif;font-size:44px;font-weight:bold;color:#2b2b2b;font-feature-settings:'palt';line-height:40px;white-space:pre;transform:scale(1.0539,1.0957)">,</div>
<div class="t" style="left:823.15px;top:136.75px;font-family:'Liberation Sans','Noto Sans CJK JP',sans-serif;font-size:13px;font-weight:normal;color:#3a3a3a;font-feature-settings:'palt';line-height:40px;white-space:pre;transform:scale(1.1832,0.9652)">数値</div>
<div class="t" style="left:962.36px;top:87.61px;font-family:'Liberation Sans','Noto Sans CJK JP',sans-serif;font-size:14px;font-weight:normal;color:#3a3a3a;font-feature-settings:'palt';line-height:40px;white-space:pre;transform:scale(1.0595,0.8954)">条件付き</div>
<div class="t" style="left:967.73px;top:106.39px;font-family:'Liberation Sans','Noto Sans CJK JP',sans-serif;font-size:14px;font-weight:normal;color:#3a3a3a;font-feature-settings:'palt';line-height:40px;white-space:pre;transform:scale(1.0434,0.8954)">書式</div>
<div class="t" style="left:1028.17px;top:88.42px;font-family:'Liberation Sans','Noto Sans CJK JP',sans-serif;font-size:14px;font-weight:normal;color:#3a3a3a;font-feature-settings:'palt';line-height:40px;white-space:pre;transform:scale(0.8895,0.8954)">テーブルとして</div>
<div class="t" style="left:1029.70px;top:106.18px;font-family:'Liberation Sans','Noto Sans CJK JP',sans-serif;font-size:14px;font-weight:normal;color:#3a3a3a;font-feature-settings:'palt';line-height:40px;white-space:pre;transform:scale(1.0566,0.8954)">書式設定</div>
<div class="t" style="left:1128.30px;top:88.54px;font-family:'Liberation Sans','Noto Sans CJK JP',sans-serif;font-size:14px;font-weight:normal;color:#3a3a3a;font-feature-settings:'palt';line-height:40px;white-space:pre;transform:scale(0.9004,0.8954)">セルの</div>
<div class="t" style="left:1114.80px;top:106.12px;font-family:'Liberation Sans','Noto Sans CJK JP',sans-serif;font-size:14px;font-weight:normal;color:#3a3a3a;font-feature-settings:'palt';line-height:40px;white-space:pre;transform:scale(0.8986,0.8954)">スタイル</div>
<div class="t" style="left:1046.10px;top:137.57px;font-family:'Liberation Sans','Noto Sans CJK JP',sans-serif;font-size:13px;font-weight:normal;color:#3a3a3a;font-feature-settings:'palt';line-height:40px;white-space:pre;transform:scale(0.9683,0.9652)">スタイル</div>
<div class="t" style="left:13.28px;top:175.76px;font-family:'Liberation Sans','Noto Sans CJK JP',sans-serif;font-size:17px;font-weight:normal;color:#666;font-feature-settings:'palt';line-height:40px;white-space:pre;transform:scale(1.0987,1.0233)">B15</div>
<div class="t" style="left:225.08px;top:173.70px;font-family:'Liberation Serif','Noto Serif CJK SC',serif;font-size:20px;font-weight:normal;color:#2a2a2a;font-feature-settings:'palt';line-height:40px;white-space:pre;font-style:italic;-webkit-text-stroke:0.2px #2a2a2a;transform:scale(1.1982,0.9446)">fx</div>
<div class="t" style="left:78.29px;top:208.65px;font-family:'Liberation Sans','Noto Sans CJK JP',sans-serif;font-size:15px;font-weight:normal;color:#3a3a3a;font-feature-settings:'palt';line-height:40px;white-space:pre;transform:scale(1.0314,0.9965)">A</div>
<div class="t" style="left:167.56px;top:208.98px;font-family:'Liberation Sans','Noto Sans CJK JP',sans-serif;font-size:15px;font-weight:normal;color:#2f6a4c;font-feature-settings:'palt';line-height:40px;white-space:pre;transform:scale(1.0314,0.9965)">B</div>
<div class="t" style="left:258.89px;top:208.87px;font-family:'Liberation Sans','Noto Sans CJK JP',sans-serif;font-size:15px;font-weight:normal;color:#3a3a3a;font-feature-settings:'palt';line-height:40px;white-space:pre;transform:scale(1.0314,0.9965)">C</div>
<div class="t" style="left:348.91px;top:208.69px;font-family:'Liberation Sans','Noto Sans CJK JP',sans-serif;font-size:15px;font-weight:normal;color:#3a3a3a;font-feature-settings:'palt';line-height:40px;white-space:pre;transform:scale(1.0314,0.9965)">D</div>
<div class="t" style="left:439.59px;top:208.87px;font-family:'Liberation Sans','Noto Sans CJK JP',sans-serif;font-size:15px;font-weight:normal;color:#3a3a3a;font-feature-settings:'palt';line-height:40px;white-space:pre;transform:scale(1.0314,0.9965)">E</div>
<div class="t" style="left:531.37px;top:208.70px;font-family:'Liberation Sans','Noto Sans CJK JP',sans-serif;font-size:15px;font-weight:normal;color:#3a3a3a;font-feature-settings:'palt';line-height:40px;white-space:pre;transform:scale(1.0314,0.9965)">F</div>
<div class="t" style="left:620.52px;top:208.87px;font-family:'Liberation Sans','Noto Sans CJK JP',sans-serif;font-size:15px;font-weight:normal;color:#3a3a3a;font-feature-settings:'palt';line-height:40px;white-space:pre;transform:scale(1.0314,0.9965)">G</div>
<div class="t" style="left:712.23px;top:209.19px;font-family:'Liberation Sans','Noto Sans CJK JP',sans-serif;font-size:15px;font-weight:normal;color:#3a3a3a;font-feature-settings:'palt';line-height:40px;white-space:pre;transform:scale(1.0314,0.9965)">H</div>
<div class="t" style="left:805.51px;top:212.37px;font-family:'Liberation Mono',monospace;font-size:15px;font-weight:normal;color:#3a3a3a;font-feature-settings:'palt';line-height:40px;white-space:pre;transform:scale(0.7132,0.9654)">I</div>
<div class="t" style="left:895.83px;top:208.98px;font-family:'Liberation Sans','Noto Sans CJK JP',sans-serif;font-size:15px;font-weight:normal;color:#3a3a3a;font-feature-settings:'palt';line-height:40px;white-space:pre;transform:scale(1.0314,0.9965)">J</div>
<div class="t" style="left:985.38px;top:209.42px;font-family:'Liberation Sans','Noto Sans CJK JP',sans-serif;font-size:15px;font-weight:normal;color:#3a3a3a;font-feature-settings:'palt';line-height:40px;white-space:pre;transform:scale(1.0314,0.9965)">K</div>
<div class="t" style="left:1075.52px;top:208.72px;font-family:'Liberation Sans','Noto Sans CJK JP',sans-serif;font-size:15px;font-weight:normal;color:#3a3a3a;font-feature-settings:'palt';line-height:40px;white-space:pre;transform:scale(1.0314,0.9965)">L</div>
<div class="t" style="left:1165.11px;top:209.35px;font-family:'Liberation Sans','Noto Sans CJK JP',sans-serif;font-size:15px;font-weight:normal;color:#3a3a3a;font-feature-settings:'palt';line-height:40px;white-space:pre;transform:scale(1.0314,0.9965)">M</div>
<div class="t" style="left:13.70px;top:244.02px;font-family:'Liberation Sans','Noto Sans CJK JP',sans-serif;font-size:15.5px;font-weight:normal;color:#404040;font-feature-settings:'palt';line-height:40px;white-space:pre;transform:scale(1.0619,1.0342)">1</div>
<div class="t" style="left:13.52px;top:272.57px;font-family:'Liberation Sans','Noto Sans CJK JP',sans-serif;font-size:15.5px;font-weight:normal;color:#404040;font-feature-settings:'palt';line-height:40px;white-space:pre;transform:scale(1.0619,1.0342)">2</div>
<div class="t" style="left:14.38px;top:302.02px;font-family:'Liberation Sans','Noto Sans CJK JP',sans-serif;font-size:15.5px;font-weight:normal;color:#404040;font-feature-settings:'palt';line-height:40px;white-space:pre;transform:scale(1.0619,1.0342)">3</div>
<div class="t" style="left:13.79px;top:330.69px;font-family:'Liberation Sans','Noto Sans CJK JP',sans-serif;font-size:15.5px;font-weight:normal;color:#404040;font-feature-settings:'palt';line-height:40px;white-space:pre;transform:scale(1.0619,1.0342)">4</div>
<div class="t" style="left:13.97px;top:360.22px;font-family:'Liberation Sans','Noto Sans CJK JP',sans-serif;font-size:15.5px;font-weight:normal;color:#404040;font-feature-settings:'palt';line-height:40px;white-space:pre;transform:scale(1.0619,1.0342)">5</div>
<div class="t" style="left:14.04px;top:388.81px;font-family:'Liberation Sans','Noto Sans CJK JP',sans-serif;font-size:15.5px;font-weight:normal;color:#404040;font-feature-settings:'palt';line-height:40px;white-space:pre;transform:scale(1.0619,1.0342)">6</div>
<div class="t" style="left:14.33px;top:418.31px;font-family:'Liberation Sans','Noto Sans CJK JP',sans-serif;font-size:15.5px;font-weight:normal;color:#404040;font-feature-settings:'palt';line-height:40px;white-space:pre;transform:scale(1.0619,1.0342)">7</div>
<div class="t" style="left:14.36px;top:447.65px;font-family:'Liberation Sans','Noto Sans CJK JP',sans-serif;font-size:15.5px;font-weight:normal;color:#404040;font-feature-settings:'palt';line-height:40px;white-space:pre;transform:scale(1.0619,1.0342)">8</div>
<div class="t" style="left:14.30px;top:476.96px;font-family:'Liberation Sans','Noto Sans CJK JP',sans-serif;font-size:15.5px;font-weight:normal;color:#404040;font-feature-settings:'palt';line-height:40px;white-space:pre;transform:scale(1.0619,1.0342)">9</div>
<div class="t" style="left:9.22px;top:506.28px;font-family:'Liberation Sans','Noto Sans CJK JP',sans-serif;font-size:15.5px;font-weight:normal;color:#404040;font-feature-settings:'palt';line-height:40px;white-space:pre;transform:scale(1.0619,1.0342)">10</div>
<div class="t" style="left:9.70px;top:534.60px;font-family:'Liberation Sans','Noto Sans CJK JP',sans-serif;font-size:15.5px;font-weight:normal;color:#404040;font-feature-settings:'palt';line-height:40px;white-space:pre;transform:scale(1.0619,1.0342)">11</div>
<div class="t" style="left:9.26px;top:563.99px;font-family:'Liberation Sans','Noto Sans CJK JP',sans-serif;font-size:15.5px;font-weight:normal;color:#404040;font-feature-settings:'palt';line-height:40px;white-space:pre;transform:scale(1.0619,1.0342)">12</div>
<div class="t" style="left:9.24px;top:593.31px;font-family:'Liberation Sans','Noto Sans CJK JP',sans-serif;font-size:15.5px;font-weight:normal;color:#404040;font-feature-settings:'palt';line-height:40px;white-space:pre;transform:scale(1.0619,1.0342)">13</div>
<div class="t" style="left:9.06px;top:622.17px;font-family:'Liberation Sans','Noto Sans CJK JP',sans-serif;font-size:15.5px;font-weight:normal;color:#404040;font-feature-settings:'palt';line-height:40px;white-space:pre;transform:scale(1.0619,1.0342)">14</div>
<div class="t" style="left:9.12px;top:650.78px;font-family:'Liberation Sans','Noto Sans CJK JP',sans-serif;font-size:15.5px;font-weight:normal;color:#2f6a4c;font-feature-settings:'palt';line-height:40px;white-space:pre;transform:scale(1.0619,1.0342)">15</div>
<div class="t" style="left:9.12px;top:680.27px;font-family:'Liberation Sans','Noto Sans CJK JP',sans-serif;font-size:15.5px;font-weight:normal;color:#404040;font-feature-settings:'palt';line-height:40px;white-space:pre;transform:scale(1.0619,1.0342)">16</div>
<div class="t" style="left:9.26px;top:709.60px;font-family:'Liberation Sans','Noto Sans CJK JP',sans-serif;font-size:15.5px;font-weight:normal;color:#404040;font-feature-settings:'palt';line-height:40px;white-space:pre;transform:scale(1.0619,1.0342)">17</div>
<div class="t" style="left:9.10px;top:739.36px;font-family:'Liberation Sans','Noto Sans CJK JP',sans-serif;font-size:15.5px;font-weight:normal;color:#404040;font-feature-settings:'palt';line-height:40px;white-space:pre;transform:scale(1.0619,1.0342)">18</div>
<div class="t" style="left:9.26px;top:768.25px;font-family:'Liberation Sans','Noto Sans CJK JP',sans-serif;font-size:15.5px;font-weight:normal;color:#404040;font-feature-settings:'palt';line-height:40px;white-space:pre;transform:scale(1.0619,1.0342)">19</div>
<div class="t" style="left:9.82px;top:797.47px;font-family:'Liberation Sans','Noto Sans CJK JP',sans-serif;font-size:15.5px;font-weight:normal;color:#404040;font-feature-settings:'palt';line-height:40px;white-space:pre;transform:scale(1.0619,1.0342)">20</div>
<div class="t" style="left:9.84px;top:826.08px;font-family:'Liberation Sans','Noto Sans CJK JP',sans-serif;font-size:15.5px;font-weight:normal;color:#404040;font-feature-settings:'palt';line-height:40px;white-space:pre;transform:scale(1.0619,1.0342)">21</div>
<div class="t" style="left:9.84px;top:854.57px;font-family:'Liberation Sans','Noto Sans CJK JP',sans-serif;font-size:15.5px;font-weight:normal;color:#404040;font-feature-settings:'palt';line-height:40px;white-space:pre;transform:scale(1.0619,1.0342)">22</div>
<div class="t" style="left:9.82px;top:884.12px;font-family:'Liberation Sans','Noto Sans CJK JP',sans-serif;font-size:15.5px;font-weight:normal;color:#404040;font-feature-settings:'palt';line-height:40px;white-space:pre;transform:scale(1.0619,1.0342)">23</div>
<div class="t" style="left:130.94px;top:272.08px;font-family:'Liberation Sans','Noto Sans CJK JP',sans-serif;font-size:16px;font-weight:bold;color:#ffffff;font-feature-settings:'palt';line-height:40px;white-space:pre;transform:scale(1.1130,1.0243)">列1</div>
<div class="t" style="left:221.94px;top:271.51px;font-family:'Liberation Sans','Noto Sans CJK JP',sans-serif;font-size:18px;font-weight:bold;color:#ffffff;font-feature-settings:'palt';line-height:40px;white-space:pre;transform:scale(0.9605,1.0000)">A</div>
<div class="t" style="left:313.06px;top:271.80px;font-family:'Liberation Sans','Noto Sans CJK JP',sans-serif;font-size:18px;font-weight:bold;color:#ffffff;font-feature-settings:'palt';line-height:40px;white-space:pre;transform:scale(0.9605,1.0000)">B</div>
<div class="t" style="left:403.77px;top:272.36px;font-family:'Liberation Sans','Noto Sans CJK JP',sans-serif;font-size:18px;font-weight:bold;color:#ffffff;font-feature-settings:'palt';line-height:40px;white-space:pre;transform:scale(0.9605,1.0000)">C</div>
<div class="t" style="left:494.52px;top:271.59px;font-family:'Liberation Sans','Noto Sans CJK JP',sans-serif;font-size:16px;font-weight:bold;color:#ffffff;font-feature-settings:'palt';line-height:40px;white-space:pre;transform:scale(1.1571,1.0310)">列2</div>
<div class="t" style="left:131.36px;top:301.56px;font-family:'Liberation Sans','Noto Sans CJK JP',sans-serif;font-size:17.5px;font-weight:300;color:#3d3d3d;font-feature-settings:'palt';line-height:40px;white-space:pre;transform:scale(1.0664,0.9623)">1月</div>
<div class="t" style="left:266.34px;top:300.29px;font-family:'Liberation Sans','Noto Sans CJK JP',sans-serif;font-size:18px;font-weight:normal;color:#4a4a4a;font-feature-settings:'palt';line-height:40px;white-space:pre;transform:scale(1.0036,1.0549)">1500</div>
<div class="t" style="left:355.97px;top:300.29px;font-family:'Liberation Sans','Noto Sans CJK JP',sans-serif;font-size:18px;font-weight:normal;color:#4a4a4a;font-feature-settings:'palt';line-height:40px;white-space:pre;transform:scale(1.0036,1.0549)">3000</div>
<div class="t" style="left:446.61px;top:300.29px;font-family:'Liberation Sans','Noto Sans CJK JP',sans-serif;font-size:18px;font-weight:normal;color:#4a4a4a;font-feature-settings:'palt';line-height:40px;white-space:pre;transform:scale(1.0036,1.0549)">2000</div>
<div class="t" style="left:538.27px;top:300.29px;font-family:'Liberation Sans','Noto Sans CJK JP',sans-serif;font-size:18px;font-weight:normal;color:#4a4a4a;font-feature-settings:'palt';line-height:40px;white-space:pre;transform:scale(1.0036,1.0549)">6500</div>
<div class="t" style="left:131.09px;top:331.09px;font-family:'Liberation Sans','Noto Sans CJK JP',sans-serif;font-size:17.5px;font-weight:300;color:#3d3d3d;font-feature-settings:'palt';line-height:40px;white-space:pre;transform:scale(1.0664,0.9623)">2月</div>
<div class="t" style="left:266.32px;top:328.84px;font-family:'Liberation Sans','Noto Sans CJK JP',sans-serif;font-size:18px;font-weight:normal;color:#4a4a4a;font-feature-settings:'palt';line-height:40px;white-space:pre;transform:scale(1.0036,1.0549)">2000</div>
<div class="t" style="left:355.97px;top:328.84px;font-family:'Liberation Sans','Noto Sans CJK JP',sans-serif;font-size:18px;font-weight:normal;color:#4a4a4a;font-feature-settings:'palt';line-height:40px;white-space:pre;transform:scale(1.0036,1.0549)">3000</div>
<div class="t" style="left:446.61px;top:328.84px;font-family:'Liberation Sans','Noto Sans CJK JP',sans-serif;font-size:18px;font-weight:normal;color:#4a4a4a;font-feature-settings:'palt';line-height:40px;white-space:pre;transform:scale(1.0036,1.0549)">3000</div>
<div class="t" style="left:537.95px;top:328.84px;font-family:'Liberation Sans','Noto Sans CJK JP',sans-serif;font-size:18px;font-weight:normal;color:#4a4a4a;font-feature-settings:'palt';line-height:40px;white-space:pre;transform:scale(1.0036,1.0549)">8000</div>
<div class="t" style="left:130.53px;top:360.17px;font-family:'Liberation Sans','Noto Sans CJK JP',sans-serif;font-size:17.5px;font-weight:300;color:#3d3d3d;font-feature-settings:'palt';line-height:40px;white-space:pre;transform:scale(1.0664,0.9623)">3月</div>
<div class="t" style="left:266.32px;top:358.40px;font-family:'Liberation Sans','Noto Sans CJK JP',sans-serif;font-size:18px;font-weight:normal;color:#4a4a4a;font-feature-settings:'palt';line-height:40px;white-space:pre;transform:scale(1.0036,1.0549)">2500</div>
<div class="t" style="left:355.97px;top:358.40px;font-family:'Liberation Sans','Noto Sans CJK JP',sans-serif;font-size:18px;font-weight:normal;color:#4a4a4a;font-feature-settings:'palt';line-height:40px;white-space:pre;transform:scale(1.0036,1.0549)">3500</div>
<div class="t" style="left:446.61px;top:358.40px;font-family:'Liberation Sans','Noto Sans CJK JP',sans-serif;font-size:18px;font-weight:normal;color:#4a4a4a;font-feature-settings:'palt';line-height:40px;white-space:pre;transform:scale(1.0036,1.0549)">2000</div>
<div class="t" style="left:537.95px;top:358.40px;font-family:'Liberation Sans','Noto Sans CJK JP',sans-serif;font-size:18px;font-weight:normal;color:#4a4a4a;font-feature-settings:'palt';line-height:40px;white-space:pre;transform:scale(1.0036,1.0549)">8000</div>
<div class="t" style="left:131.35px;top:388.77px;font-family:'Liberation Sans','Noto Sans CJK JP',sans-serif;font-size:17.5px;font-weight:300;color:#3d3d3d;font-feature-settings:'palt';line-height:40px;white-space:pre;transform:scale(1.0664,0.9623)">4月</div>
<div class="t" style="left:266.32px;top:386.96px;font-family:'Liberation Sans','Noto Sans CJK JP',sans-serif;font-size:18px;font-weight:normal;color:#4a4a4a;font-feature-settings:'palt';line-height:40px;white-space:pre;transform:scale(1.0036,1.0549)">3000</div>
<div class="t" style="left:355.97px;top:386.96px;font-family:'Liberation Sans','Noto Sans CJK JP',sans-serif;font-size:18px;font-weight:normal;color:#4a4a4a;font-feature-settings:'palt';line-height:40px;white-space:pre;transform:scale(1.0036,1.0549)">3500</div>
<div class="t" style="left:446.61px;top:386.96px;font-family:'Liberation Sans','Noto Sans CJK JP',sans-serif;font-size:18px;font-weight:normal;color:#4a4a4a;font-feature-settings:'palt';line-height:40px;white-space:pre;transform:scale(1.0036,1.0549)">2000</div>
<div class="t" style="left:537.95px;top:386.96px;font-family:'Liberation Sans','Noto Sans CJK JP',sans-serif;font-size:18px;font-weight:normal;color:#4a4a4a;font-feature-settings:'palt';line-height:40px;white-space:pre;transform:scale(1.0036,1.0549)">8500</div>
<div class="t" style="left:130.76px;top:417.76px;font-family:'Liberation Sans','Noto Sans CJK JP',sans-serif;font-size:17.5px;font-weight:300;color:#3d3d3d;font-feature-settings:'palt';line-height:40px;white-space:pre;transform:scale(1.0664,0.9623)">5月</div>
<div class="t" style="left:266.32px;top:416.51px;font-family:'Liberation Sans','Noto Sans CJK JP',sans-serif;font-size:18px;font-weight:normal;color:#4a4a4a;font-feature-settings:'palt';line-height:40px;white-space:pre;transform:scale(1.0036,1.0549)">3500</div>
<div class="t" style="left:355.97px;top:416.51px;font-family:'Liberation Sans','Noto Sans CJK JP',sans-serif;font-size:18px;font-weight:normal;color:#4a4a4a;font-feature-settings:'palt';line-height:40px;white-space:pre;transform:scale(1.0036,1.0549)">3750</div>
<div class="t" style="left:447.28px;top:417.15px;font-family:'Liberation Sans','Noto Sans CJK JP',sans-serif;font-size:18px;font-weight:normal;color:#4a4a4a;font-feature-settings:'palt';line-height:40px;white-space:pre;transform:scale(1.0036,1.0549)">4000</div>
<div class="t" style="left:530.33px;top:417.15px;font-family:'Liberation Sans','Noto Sans CJK JP',sans-serif;font-size:18px;font-weight:normal;color:#4a4a4a;font-feature-settings:'palt';line-height:40px;white-space:pre;transform:scale(1.0036,1.0549)">11250</div>
<div class="t" style="left:130.53px;top:446.83px;font-family:'Liberation Sans','Noto Sans CJK JP',sans-serif;font-size:17.5px;font-weight:300;color:#3d3d3d;font-feature-settings:'palt';line-height:40px;white-space:pre;transform:scale(1.0664,0.9623)">6月</div>
<div class="t" style="left:266.45px;top:445.58px;font-family:'Liberation Sans','Noto Sans CJK JP',sans-serif;font-size:18px;font-weight:normal;color:#4a4a4a;font-feature-settings:'palt';line-height:40px;white-space:pre;transform:scale(1.0036,1.0549)">4000</div>
<div class="t" style="left:355.97px;top:446.05px;font-family:'Liberation Sans','Noto Sans CJK JP',sans-serif;font-size:18px;font-weight:normal;color:#4a4a4a;font-feature-settings:'palt';line-height:40px;white-space:pre;transform:scale(1.0036,1.0549)">3950</div>
<div class="t" style="left:446.61px;top:446.05px;font-family:'Liberation Sans','Noto Sans CJK JP',sans-serif;font-size:18px;font-weight:normal;color:#4a4a4a;font-feature-settings:'palt';line-height:40px;white-space:pre;transform:scale(1.0036,1.0549)">2000</div>
<div class="t" style="left:538.27px;top:446.05px;font-family:'Liberation Sans','Noto Sans CJK JP',sans-serif;font-size:18px;font-weight:normal;color:#4a4a4a;font-feature-settings:'palt';line-height:40px;white-space:pre;transform:scale(1.0036,1.0549)">9950</div>
<div class="t" style="left:130.53px;top:476.05px;font-family:'Liberation Sans','Noto Sans CJK JP',sans-serif;font-size:17.5px;font-weight:300;color:#3d3d3d;font-feature-settings:'palt';line-height:40px;white-space:pre;transform:scale(1.0664,0.9623)">7月</div>
<div class="t" style="left:266.45px;top:475.03px;font-family:'Liberation Sans','Noto Sans CJK JP',sans-serif;font-size:18px;font-weight:normal;color:#4a4a4a;font-feature-settings:'palt';line-height:40px;white-space:pre;transform:scale(1.0036,1.0549)">4500</div>
<div class="t" style="left:356.36px;top:475.03px;font-family:'Liberation Sans','Noto Sans CJK JP',sans-serif;font-size:18px;font-weight:normal;color:#4a4a4a;font-feature-settings:'palt';line-height:40px;white-space:pre;transform:scale(1.0036,1.0549)">4150</div>
<div class="t" style="left:446.61px;top:474.61px;font-family:'Liberation Sans','Noto Sans CJK JP',sans-serif;font-size:18px;font-weight:normal;color:#4a4a4a;font-feature-settings:'palt';line-height:40px;white-space:pre;transform:scale(1.0036,1.0549)">2000</div>
<div class="t" style="left:528.12px;top:474.61px;font-family:'Liberation Sans','Noto Sans CJK JP',sans-serif;font-size:18px;font-weight:normal;color:#4a4a4a;font-feature-settings:'palt';line-height:40px;white-space:pre;transform:scale(1.0036,1.0549)">10650</div>
<div class="t" style="left:130.81px;top:505.41px;font-family:'Liberation Sans','Noto Sans CJK JP',sans-serif;font-size:17.5px;font-weight:300;color:#3d3d3d;font-feature-settings:'palt';line-height:40px;white-space:pre;transform:scale(1.0664,0.9623)">8月</div>
<div class="t" style="left:266.32px;top:504.14px;font-family:'Liberation Sans','Noto Sans CJK JP',sans-serif;font-size:18px;font-weight:normal;color:#4a4a4a;font-feature-settings:'palt';line-height:40px;white-space:pre;transform:scale(1.0036,1.0549)">5000</div>
<div class="t" style="left:356.36px;top:504.46px;font-family:'Liberation Sans','Noto Sans CJK JP',sans-serif;font-size:18px;font-weight:normal;color:#4a4a4a;font-feature-settings:'palt';line-height:40px;white-space:pre;transform:scale(1.0036,1.0549)">4350</div>
<div class="t" style="left:446.64px;top:504.14px;font-family:'Liberation Sans','Noto Sans CJK JP',sans-serif;font-size:18px;font-weight:normal;color:#4a4a4a;font-feature-settings:'palt';line-height:40px;white-space:pre;transform:scale(1.0036,1.0549)">1500</div>
<div class="t" style="left:528.12px;top:504.14px;font-family:'Liberation Sans','Noto Sans CJK JP',sans-serif;font-size:18px;font-weight:normal;color:#4a4a4a;font-feature-settings:'palt';line-height:40px;white-space:pre;transform:scale(1.0036,1.0549)">10850</div>
<div class="t" style="left:130.53px;top:535.49px;font-family:'Liberation Sans','Noto Sans CJK JP',sans-serif;font-size:17.5px;font-weight:300;color:#3d3d3d;font-feature-settings:'palt';line-height:40px;white-space:pre;transform:scale(1.0664,0.9623)">9月</div>
<div class="t" style="left:266.32px;top:532.70px;font-family:'Liberation Sans','Noto Sans CJK JP',sans-serif;font-size:18px;font-weight:normal;color:#4a4a4a;font-feature-settings:'palt';line-height:40px;white-space:pre;transform:scale(1.0036,1.0549)">5500</div>
<div class="t" style="left:356.36px;top:532.90px;font-family:'Liberation Sans','Noto Sans CJK JP',sans-serif;font-size:18px;font-weight:normal;color:#4a4a4a;font-feature-settings:'palt';line-height:40px;white-space:pre;transform:scale(1.0036,1.0549)">4550</div>
<div class="t" style="left:446.61px;top:532.70px;font-family:'Liberation Sans','Noto Sans CJK JP',sans-serif;font-size:18px;font-weight:normal;color:#4a4a4a;font-feature-settings:'palt';line-height:40px;white-space:pre;transform:scale(1.0036,1.0549)">2000</div>
<div class="t" style="left:528.12px;top:532.70px;font-family:'Liberation Sans','Noto Sans CJK JP',sans-serif;font-size:18px;font-weight:normal;color:#4a4a4a;font-feature-settings:'palt';line-height:40px;white-space:pre;transform:scale(1.0036,1.0549)">12050</div>
<div class="t" style="left:131.45px;top:563.51px;font-family:'Liberation Sans','Noto Sans CJK JP',sans-serif;font-size:17.5px;font-weight:300;color:#3d3d3d;font-feature-settings:'palt';line-height:40px;white-space:pre;transform:scale(1.0664,0.9623)">10月</div>
<div class="t" style="left:266.32px;top:562.24px;font-family:'Liberation Sans','Noto Sans CJK JP',sans-serif;font-size:18px;font-weight:normal;color:#4a4a4a;font-feature-settings:'palt';line-height:40px;white-space:pre;transform:scale(1.0036,1.0549)">6000</div>
<div class="t" style="left:356.36px;top:562.33px;font-family:'Liberation Sans','Noto Sans CJK JP',sans-serif;font-size:18px;font-weight:normal;color:#4a4a4a;font-feature-settings:'palt';line-height:40px;white-space:pre;transform:scale(1.0036,1.0549)">4750</div>
<div class="t" style="left:446.64px;top:562.24px;font-family:'Liberation Sans','Noto Sans CJK JP',sans-serif;font-size:18px;font-weight:normal;color:#4a4a4a;font-feature-settings:'palt';line-height:40px;white-space:pre;transform:scale(1.0036,1.0549)">1000</div>
<div class="t" style="left:530.33px;top:562.33px;font-family:'Liberation Sans','Noto Sans CJK JP',sans-serif;font-size:18px;font-weight:normal;color:#4a4a4a;font-feature-settings:'palt';line-height:40px;white-space:pre;transform:scale(1.0036,1.0549)">11750</div>
<div class="t" style="left:130.74px;top:593.08px;font-family:'Liberation Sans','Noto Sans CJK JP',sans-serif;font-size:17.5px;font-weight:300;color:#3d3d3d;font-feature-settings:'palt';line-height:40px;white-space:pre;transform:scale(1.0664,0.9623)">11月</div>
<div class="t" style="left:266.32px;top:590.79px;font-family:'Liberation Sans','Noto Sans CJK JP',sans-serif;font-size:18px;font-weight:normal;color:#4a4a4a;font-feature-settings:'palt';line-height:40px;white-space:pre;transform:scale(1.0036,1.0549)">6500</div>
<div class="t" style="left:356.36px;top:590.78px;font-family:'Liberation Sans','Noto Sans CJK JP',sans-serif;font-size:18px;font-weight:normal;color:#4a4a4a;font-feature-settings:'palt';line-height:40px;white-space:pre;transform:scale(1.0036,1.0549)">4950</div>
<div class="t" style="left:446.61px;top:590.79px;font-family:'Liberation Sans','Noto Sans CJK JP',sans-serif;font-size:18px;font-weight:normal;color:#4a4a4a;font-feature-settings:'palt';line-height:40px;white-space:pre;transform:scale(1.0036,1.0549)">3000</div>
<div class="t" style="left:528.12px;top:590.79px;font-family:'Liberation Sans','Noto Sans CJK JP',sans-serif;font-size:18px;font-weight:normal;color:#4a4a4a;font-feature-settings:'palt';line-height:40px;white-space:pre;transform:scale(1.0036,1.0549)">14450</div>
<div class="t" style="left:131.45px;top:621.61px;font-family:'Liberation Sans','Noto Sans CJK JP',sans-serif;font-size:17.5px;font-weight:300;color:#3d3d3d;font-feature-settings:'palt';line-height:40px;white-space:pre;transform:scale(1.0664,0.9623)">12月</div>
<div class="t" style="left:266.31px;top:620.33px;font-family:'Liberation Sans','Noto Sans CJK JP',sans-serif;font-size:18px;font-weight:normal;color:#4a4a4a;font-feature-settings:'palt';line-height:40px;white-space:pre;transform:scale(1.0036,1.0549)">7000</div>
<div class="t" style="left:355.97px;top:620.35px;font-family:'Liberation Sans','Noto Sans CJK JP',sans-serif;font-size:18px;font-weight:normal;color:#4a4a4a;font-feature-settings:'palt';line-height:40px;white-space:pre;transform:scale(1.0036,1.0549)">5150</div>
<div class="t" style="left:446.61px;top:620.35px;font-family:'Liberation Sans','Noto Sans CJK JP',sans-serif;font-size:18px;font-weight:normal;color:#4a4a4a;font-feature-settings:'palt';line-height:40px;white-space:pre;transform:scale(1.0036,1.0549)">2000</div>
<div class="t" style="left:528.12px;top:620.35px;font-family:'Liberation Sans','Noto Sans CJK JP',sans-serif;font-size:18px;font-weight:normal;color:#4a4a4a;font-feature-settings:'palt';line-height:40px;white-space:pre;transform:scale(1.0036,1.0549)">14150</div>
<div class="t" style="left:891.44px;top:87.59px;font-family:'Liberation Sans','Noto Sans CJK JP',sans-serif;font-size:9.5px;font-weight:normal;color:#454545;font-feature-settings:'palt';line-height:40px;white-space:pre;letter-spacing:0.9px;transform:scale(1.1223,0.9891)">.0</div>
<div class="t" style="left:885.26px;top:96.22px;font-family:'Liberation Sans','Noto Sans CJK JP',sans-serif;font-size:9.5px;font-weight:normal;color:#454545;font-feature-settings:'palt';line-height:40px;white-space:pre;letter-spacing:0.9px;transform:scale(1.0419,1.1500)">.00</div>
<div class="t" style="left:917.13px;top:88.48px;font-family:'Liberation Sans','Noto Sans CJK JP',sans-serif;font-size:9.5px;font-weight:normal;color:#454545;font-feature-settings:'palt';line-height:40px;white-space:pre;letter-spacing:0.9px;transform:scale(1.1002,0.9936)">.00</div>
<div class="t" style="left:922.94px;top:96.04px;font-family:'Liberation Sans','Noto Sans CJK JP',sans-serif;font-size:9.5px;font-weight:normal;color:#454545;font-feature-settings:'palt';line-height:40px;white-space:pre;letter-spacing:0.9px;transform:scale(1.2088,1.1500)">.0</div>
</div>
</body></html>
